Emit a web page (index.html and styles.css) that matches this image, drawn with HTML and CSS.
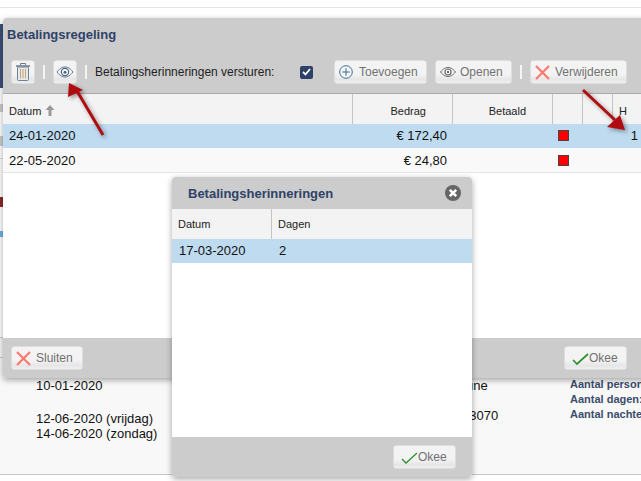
FILE: index.html
```html
<!DOCTYPE html>
<html lang="nl">
<head>
<meta charset="utf-8">
<title>Betalingsregeling</title>
<link rel="stylesheet" href="styles.css">
</head>
<body>
<div class="page">
  <div class="behind">
    <div class="edge">
      <div class="stub stub-nav"></div>
      <div class="stub stub-band-1"></div>
      <div class="stub stub-band-2"></div>
      <div class="stub stub-line"></div>
      <div class="stub stub-red"></div>
      <div class="stub stub-blue"></div>
    </div>
    <section class="info">
      <div class="info-dates">
        <div>10-01-2020</div>
        <div class="gap">12-06-2020 (vrijdag)</div>
        <div>14-06-2020 (zondag)</div>
      </div>
      <div class="info-place">
        <div class="place-1">une</div>
        <div class="place-2">13070</div>
      </div>
      <div class="info-counts">
        <div>Aantal personen:</div>
        <div>Aantal dagen:</div>
        <div>Aantal nachten:</div>
      </div>
    </section>
  </div>

  <div class="dialog dialog-main">
    <div class="dlg-head">
      <h2 class="dlg-title">Betalingsregeling</h2>
      <div class="toolbar">
        <button class="btn btn-icon"><svg width="14" height="18" viewBox="0 0 14 18"><path d="M4.500 2V.5h5V2" fill="none" stroke="#777"/><rect x="0" y="2" width="14" height="2" fill="#8d99a3"/><rect x="1.500" y="4" width="11" height="13.500" rx="1" fill="#e6eaee" stroke="#6c8396"/><path d="M4.500 6v9.500M7 6v9.500M9.500 6v9.500" stroke="#c8a878" stroke-width="1.100"/></svg></button>
        <span class="sep"></span>
        <button class="btn btn-icon"><svg width="18" height="12" viewBox="0 0 18 12"><path d="M1 6C4 2 6.500 1 9 1s5 1 8 5c-3 4-5.500 5-8 5S4 10 1 6z" fill="#eef2f5" stroke="#5f7c95"/><circle cx="9" cy="6" r="3.600" fill="#fff" stroke="#4c6982" stroke-width="1.200"/><circle cx="9" cy="6.300" r="1.500" fill="#4c6982"/></svg></button>
        <span class="sep"></span>
        <span class="tool-label">Betalingsherinneringen versturen:</span>
        <span class="check"><svg width="9" height="8" viewBox="0 0 9 8"><path d="M1 4l2.500 2.500L8 1" fill="none" stroke="#fff" stroke-width="1.800"/></svg></span>
        <button class="btn btn-add"><svg width="14" height="14" viewBox="0 0 14 14"><circle cx="7" cy="7" r="6.300" fill="#f4f6f8" stroke="#3f6c96"/><path d="M7 3.200v7.600M3.200 7h7.600" stroke="#3f6c96"/></svg>Toevoegen</button>
        <button class="btn btn-open"><svg width="16" height="10" viewBox="0 0 16 10"><path d="M.5 5C3.500 1.500 5.500.5 8 .5s4.500 1 7.500 4.500c-3 3.500-5 4.500-7.500 4.500S3.500 8.500.5 5z" fill="#eef0f0" stroke="#666"/><circle cx="8" cy="5" r="3" fill="#fff" stroke="#666" stroke-width="1.200"/><circle cx="8" cy="5" r="1.200" fill="#666"/></svg>Openen</button>
        <span class="sep"></span>
        <button class="btn btn-del"><svg width="15" height="15" viewBox="0 0 15 15"><path d="M1 1l13 13M14 1L1 14" stroke="#fb7a70" stroke-width="2.200"/></svg>Verwijderen</button>
      </div>
    </div>
    <div class="grid-main grid-head">
      <div class="th">Datum <svg class="sort" width="10" height="11" viewBox="0 0 10 11"><path d="M5 0l4.500 5H6.500v6h-3V5H.5z" fill="#999"/></svg></div>
      <div class="th th-end">Bedrag</div>
      <div class="th th-end">Betaald</div>
      <div class="th"></div>
      <div class="th"></div>
      <div class="th th-last">H</div>
    </div>
    <div class="grid-main row row-sel">
      <div class="td">24-01-2020</div>
      <div class="td td-end">€ 172,40</div>
      <div class="td"></div>
      <div class="td td-flag"><span class="flag"></span></div>
      <div class="td"></div>
      <div class="td td-end td-h">1</div>
    </div>
    <div class="grid-main row row-alt">
      <div class="td">22-05-2020</div>
      <div class="td td-end">€ 24,80</div>
      <div class="td"></div>
      <div class="td td-flag"><span class="flag"></span></div>
      <div class="td"></div>
      <div class="td"></div>
    </div>
    <div class="dlg-body"></div>
    <div class="dlg-foot foot-main">
      <button class="btn btn-close"><svg width="15" height="15" viewBox="0 0 15 15"><path d="M1 1l13 13M14 1L1 14" stroke="#fb7a70" stroke-width="2.200"/></svg>Sluiten</button>
      <button class="btn btn-ok"><svg width="17" height="13" viewBox="0 0 17 13"><path d="M1 8l4 4L16 2" fill="none" stroke="#2f8f2f" stroke-width="1.700"/></svg>Okee</button>
    </div>
  </div>

  <div class="dialog dialog-sub">
    <div class="sub-head">
      <h2 class="dlg-title">Betalingsherinneringen</h2>
      <svg width="16" height="16" viewBox="0 0 16 16"><circle cx="8" cy="8" r="8" fill="#666"/><path d="M4.800 4.800l6.400 6.400M11.200 4.800l-6.400 6.400" stroke="#fff" stroke-width="2.600"/></svg>
    </div>
    <div class="grid-sub grid-head">
      <div class="th">Datum</div>
      <div class="th th-last">Dagen</div>
    </div>
    <div class="grid-sub row row-sel">
      <div class="td">17-03-2020</div>
      <div class="td">2</div>
    </div>
    <div class="dlg-body"></div>
    <div class="dlg-foot foot-sub">
      <button class="btn btn-ok"><svg width="17" height="13" viewBox="0 0 17 13"><path d="M1 8l4 4L16 2" fill="none" stroke="#2f8f2f" stroke-width="1.300"/></svg>Okee</button>
    </div>
  </div>

  <svg class="arrow arrow-eye" width="40" height="56" viewBox="0 0 40 56"><path d="M34 52L8 8" stroke="#b00c10" stroke-width="3"/><path d="M0 0L14 7-1 14z" fill="#b00c10"/></svg>
  <svg class="arrow arrow-h" width="46" height="44" viewBox="0 0 46 44"><path d="M1 1l32 30" stroke="#b00c10" stroke-width="3"/><path d="M43 41L25 38 38 26z" fill="#b00c10"/></svg>
</div>
</body>
</html>
```

FILE: styles.css
```css
* { box-sizing: border-box; }
html, body { margin: 0; padding: 0; }
body { background: #fff; font-family: "Liberation Sans", Arial, sans-serif; color: #111; }
.page { position: relative; width: 641px; height: 481px; overflow: hidden; }

.behind { display: flex; flex-direction: column; height: 475px; padding-top: 7px; }
.edge { flex: 1; padding-top: 16px; border-top: 1px solid #e4e4e4; }
.stub { width: 3px; }
.stub-nav { height: 64px; background: #3d5078; }
.stub-band-1 { height: 8px; margin-top: 16px; background: #ccc; }
.stub-band-2 { height: 10px; margin-top: 24px; background: #ccc; }
.stub-line { height: 1px; margin-top: 12px; background: #ddd; }
.stub-red { height: 10px; margin-top: 38px; background: #8a2a2a; }
.stub-blue { height: 6px; margin-top: 24px; background: #6cb4e8; }

.info { display: flex; flex: none; height: 138px; padding-top: 39px; background: #f8f8f8 linear-gradient(#ccc, #ccc) no-repeat 0 19px / 3px 1px; border-top: 1px solid #ccc; border-bottom: 1px solid #c8c8c8; font-size: 13px; line-height: 15px; }
.info-dates { flex: none; width: 462px; padding: 1px 0 0 36px; }
.gap { margin-top: 18px; }
.info-place { flex: none; width: 108px; padding-top: 1px; }
.place-1 { padding-left: 4px; }
.place-2 { margin-top: 15px; }
.info-counts { flex: none; font-size: 11px; font-weight: bold; color: #3a4d6b; white-space: nowrap; }

.dialog { position: absolute; display: flex; flex-direction: column; background: #fff; box-shadow: 0 2px 6px rgba(0,0,0,.35); border-radius: 4px; overflow: hidden; }
.dialog-main { left: 3px; top: 18px; width: 650px; height: 360px; }
.dialog-sub { left: 172px; top: 177px; width: 300px; height: 300px; }

.dlg-head { height: 76px; padding: 8px 0 0 4px; background: #ccc; border-bottom: 1px solid #aaa; }
.dlg-title { margin: 0; font-size: 13px; line-height: 17px; font-weight: bold; color: #2f4268; }
.toolbar { display: flex; align-items: center; margin: 17px 0 0 4px; }
.sep { width: 2px; height: 14px; margin: 0 8px; background: #f4f4f4; }
.tool-label { width: 205px; font-size: 12px; color: #222; }
.check { display: flex; align-items: center; justify-content: center; width: 13px; height: 13px; margin-right: 21px; background: #2d4068; border-radius: 2px; }

.btn { display: flex; align-items: center; gap: 5px; height: 24px; padding: 0 0 0 4px; border: 1px solid #ddd; border-radius: 3px; background: linear-gradient(#f3f3f3 0 60%, #e6e6e6 85%, #efefef); font: 12px "Liberation Sans", Arial, sans-serif; color: #707070; }
.btn-icon { justify-content: center; width: 24px; padding: 0; }
.btn-add { width: 93px; margin-right: 8px; gap: 6px; }
.btn-open { width: 77px; gap: 4px; }
.btn-del { width: 97px; }
.btn-close { width: 72px; }
.btn-ok { width: 63px; padding-left: 7px; gap: 0; }

.grid-main { display: grid; grid-template-columns: 350px 100px 100px 30px 30px 40px; }
.grid-sub { display: grid; grid-template-columns: 100px 200px; }
.grid-head { height: 30px; background: #f3f3f3; font-size: 11px; color: #222; }
.th { display: flex; align-items: center; gap: 1px; padding: 0 6px; border-right: 1px solid #c4c4c4; }
.th-end { justify-content: flex-end; padding-right: 26px; }
.th-last { border-right: 0; }
.grid-main .th { padding-top: 3px; }
.sort { margin-left: 3px; }
.row { height: 24px; font-size: 13px; }
.row-sel { background: #bfdbf0; padding-bottom: 1px; }
.row-alt { background: #f9f9f9; border-bottom: 1px solid #e6e6e6; height: 25px; }
.td { display: flex; align-items: center; padding: 0 6px; color: #111; }
.td-end { justify-content: flex-end; padding-right: 6px; }
.td-h { padding-right: 15px; }
.td-flag { padding: 0 0 0 5px; }
.flag { width: 11px; height: 11px; background: #f00; border: 1px solid #444; }

.dlg-body { flex: 1; background: #fff; }
.dlg-foot { display: flex; align-items: center; justify-content: space-between; height: 40px; background: #ccc; }
.foot-main { padding: 0 26px 0 8px; }
.foot-sub { justify-content: flex-end; padding-right: 16px; }

.sub-head { display: flex; align-items: center; justify-content: space-between; height: 32px; padding: 0 11px 0 16px; background: #ccc; }
.grid-sub .td { padding-left: 7px; }

.arrow { position: absolute; overflow: visible; filter: drop-shadow(2px 2px 2px rgba(0,0,0,.4)); }
.arrow-eye { left: 69px; top: 83px; }
.arrow-h { left: 582px; top: 89px; }
```
